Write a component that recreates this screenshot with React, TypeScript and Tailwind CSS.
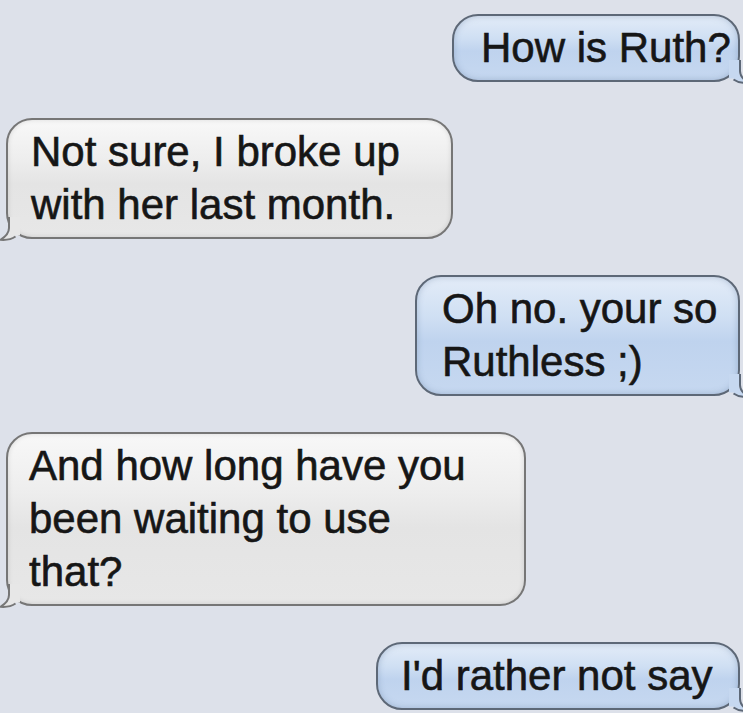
import React from "react";

type Msg = {
  from: "me" | "them";
  lines: string[];
  width: string;
  pad: string;
};

const messages: Msg[] = [
  { from: "me", lines: ["How is Ruth?"], width: "w-[288px]", pad: "pl-[27px]" },
  { from: "them", lines: ["Not sure, I broke up", "with her last month."], width: "w-[447px]", pad: "pl-[23px]" },
  { from: "me", lines: ["Oh no. your so", "Ruthless ;)"], width: "w-[325px]", pad: "pl-[25px]" },
  {
    from: "them",
    lines: ["And how long have you", "been waiting to use", "that?"],
    width: "w-[520px]",
    pad: "pl-[21px]",
  },
  { from: "me", lines: ["I'd rather not say"], width: "w-[364px]", pad: "pl-[23px]" },
];

function Tail({ side, fill, stroke }: { side: "left" | "right"; fill: string; stroke: string }) {
  // little hooked tail at the bottom corner of the bubble
  const flip = side === "right";
  return (
    <svg
      width="20"
      height="24"
      viewBox="0 0 20 24"
      className={`absolute bottom-[-4px] ${flip ? "right-[-11px] -scale-x-100" : "left-[-8px]"}`}
    >
      <path
        d="M10 0 L10 11 C10 16.5 6 20 1 22.5 C7 23 12 21.5 15.5 18.5 L20 18.5 L20 0 Z"
        fill={fill}
        stroke="none"
      />
      <path
        d="M9 0 L9 11 C9 16.5 5 20 0.5 22.8 C7 23.3 12 22 15.5 19.5"
        fill="none"
        stroke={stroke}
        strokeWidth="2"
      />
    </svg>
  );
}

function Bubble({ msg }: { msg: Msg }) {
  const me = msg.from === "me";
  return (
    <div
      className={`relative ${msg.width} ${msg.pad} pr-3 pt-[5px] pb-[6px] rounded-[26px] border-2 ${
        me
          ? "self-end mr-[3px] border-[#5d6877] bg-[linear-gradient(180deg,#e3ecf8_0%,#cfdff3_35%,#bfd3ee_55%,#c6d8f0_100%)] shadow-[inset_0_0_6px_rgba(80,110,150,0.35)]"
          : "self-start ml-[6px] border-[#767676] bg-[linear-gradient(180deg,#f8f8f8_0%,#ededed_35%,#e4e4e4_55%,#e7e7e7_100%)] shadow-[inset_0_0_5px_rgba(0,0,0,0.12)]"
      }`}
    >
      {msg.lines.map((l, i) => (
        <div
          key={i}
          className="text-[42px] leading-[53px] text-[#161616] whitespace-nowrap [-webkit-text-stroke:0.6px_#161616]"
        >
          {l}
        </div>
      ))}
      <Tail
        side={me ? "right" : "left"}
        fill={me ? "#c6d8f0" : "#e7e7e7"}
        stroke={me ? "#5d6877" : "#767676"}
      />
    </div>
  );
}

export default function App() {
  return (
    <div
      className="w-[743px] h-[713px] overflow-hidden bg-[#dde1ea] flex flex-col gap-[36px] pt-[14px]"
      style={{ fontFamily: '"Liberation Sans", Arial, sans-serif' }}
    >
      {messages.map((m, i) => (
        <Bubble key={i} msg={m} />
      ))}
    </div>
  );
}
